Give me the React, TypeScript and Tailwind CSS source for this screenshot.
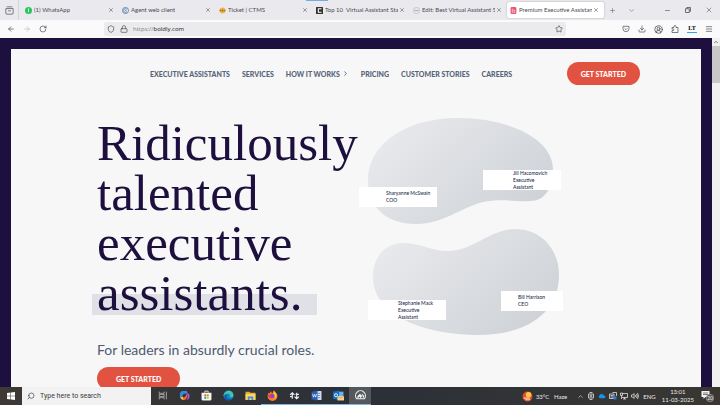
import type { ReactNode } from 'react';
import {
  ArrowLeft,
  ArrowRight,
  ChevronDown,
  ChevronRight,
  ChevronUp,
  CircleUserRound,
  Download,
  Lock,
  Menu,
  Minus,
  Plus,
  RotateCw,
  Search,
  Shield,
  Star,
  X,
} from 'lucide-react';

const tabs: { title: string; icon: ReactNode; active?: boolean }[] = [
  {
    title: '(1) WhatsApp',
    icon: (
      <svg viewBox="0 0 12 12" className="size-full">
        <circle cx="6" cy="6" r="6" fill="#25c65b" />
        <path d="M6 3v6M5 4l1-1" stroke="#fff" strokeWidth="1.5" fill="none" />
      </svg>
    ),
  },
  {
    title: 'Agent web client',
    icon: (
      <svg viewBox="0 0 12 12" className="size-full" fill="none">
        <circle cx="6" cy="6" r="5.2" stroke="#3a7fb5" strokeWidth="1.4" />
        <path d="M8.5 4A3.2 3.2 0 1 0 8.5 8" stroke="#3a7fb5" strokeWidth="1.2" />
        <circle cx="6.5" cy="6" r="1.3" fill="#e0705a" />
      </svg>
    ),
  },
  {
    title: 'Ticket | CTMS',
    icon: (
      <svg viewBox="0 0 12 12" className="size-full">
        <circle cx="6" cy="6" r="5" fill="#f3b531" />
        <path d="M0 6h12M3 4v4M6 3.5v5M9 4v4" stroke="#8a7a55" />
      </svg>
    ),
  },
  {
    title: 'Top 10  Virtual Assistant Staff',
    icon: (
      <svg viewBox="0 0 12 12" className="size-full">
        <rect width="12" height="12" rx="1" fill="#333" />
        <path d="M9.5 3H4v6h5.5" stroke="#fff" strokeWidth="1.8" fill="none" />
      </svg>
    ),
  },
  {
    title: 'Edit: Best Virtual Assistant Sta',
    icon: (
      <svg viewBox="0 0 12 12" className="size-full" fill="none" stroke="#aeb0b8">
        <circle cx="6" cy="6" r="5.3" />
        <path d="M2.5 6h7" strokeWidth="2" />
      </svg>
    ),
  },
  {
    title: 'Premium Executive Assistants',
    active: true,
    icon: (
      <svg viewBox="0 0 12 12" className="size-full">
        <rect x="1" width="10" height="12" rx="2" fill="#f0577c" />
        <path d="M4 3v6h4V5.5H4" stroke="#fbd0da" strokeWidth="1.2" fill="none" />
      </svg>
    ),
  },
];

const menu = ['EXECUTIVE ASSISTANTS', 'SERVICES', 'HOW IT WORKS', 'PRICING', 'CUSTOMER STORIES', 'CAREERS'];

function Tab({ title, icon, active }: { title: string; icon: ReactNode; active?: boolean }) {
  return (
    <div
      className={`my-[2px] flex min-w-0 max-w-[97px] flex-1 items-center rounded-xs pl-[3px] pr-[5px] ${
        active ? 'bg-white shadow-[0_0_2px_#a5a5ad]' : ''
      }`}
    >
      <a href="#" className="flex min-w-0 flex-1 items-center gap-[2px] text-[#4a4a52]">
        <span className="size-[7px] shrink-0">{icon}</span>
        <span className="overflow-hidden whitespace-pre">{title}</span>
      </a>
      <button aria-label="Close tab" className="ml-px shrink-0">
        <X className="size-[6px]" />
      </button>
    </div>
  );
}

function BrowserChrome() {
  return (
    <header className="shrink-0 font-[Lato,sans-serif] text-[6px] leading-[8px] text-[#45454d]">
      <div className="relative flex h-5 bg-[#eae9ee]">
        <span className="absolute left-[306px] top-0 h-px w-[22px] bg-[#74aee0]" />
        <button aria-label="Firefox view" className="mr-[3px] flex w-[19px] shrink-0 items-center justify-center border-r border-[#d5d4da]">
          <svg viewBox="0 0 16 16" className="size-[9px]" fill="none" stroke="currentColor" strokeWidth="1.2">
            <path d="M3 1.500h10M1.500 4.500h13v8a2 2 0 0 1-2 2h-9a2 2 0 0 1-2-2zM5.500 8.500h5" />
          </svg>
        </button>
        {tabs.map((tab) => (
          <Tab key={tab.title} {...tab} />
        ))}
        <div className="ml-[5px] flex items-center gap-3">
          <button aria-label="New tab"><Plus className="size-[7px]" strokeWidth={1.5} /></button>
          <button aria-label="List tabs"><ChevronDown className="size-[7px]" strokeWidth={1.5} /></button>
        </div>
        <div className="ml-auto flex items-center gap-[14px] pr-[7px]">
          <button aria-label="Minimize"><Minus className="size-[7px]" /></button>
          <button aria-label="Restore">
            <svg viewBox="0 0 12 12" className="size-[6px]" fill="none" stroke="currentColor" strokeWidth="1.5">
              <path d="M1 3.500h7.500V11H1zM3.500 3.500V1H11v7.500H8.500" />
            </svg>
          </button>
          <button aria-label="Close window"><X className="size-[8px]" strokeWidth={1.5} /></button>
        </div>
      </div>

      <div className="flex h-[18px] items-center bg-[#fafafb] px-[7px]">
        <div className="flex w-[97px] shrink-0 items-center gap-2">
          <button aria-label="Back"><ArrowLeft className="size-[8px]" /></button>
          <button aria-label="Forward" className="text-[#b9b9be]"><ArrowRight className="size-[8px]" /></button>
          <button aria-label="Reload"><RotateCw className="size-[8px]" /></button>
        </div>
        <div className="flex h-[14px] flex-1 items-center gap-1 rounded-xs bg-[#ebebed] px-[3px]">
          <Shield className="size-[8px]" />
          <Lock className="mx-px size-[8px]" />
          <div className="relative flex-1 font-['Open_Sans',sans-serif]">
            <label htmlFor="url" className="sr-only">Address</label>
            <span className="pointer-events-none absolute inset-0 text-[#7b7b82]" aria-hidden="true">
              https://<span className="text-[#17171c]">boldly.com</span>
            </span>
            <input id="url" className="block w-full bg-transparent text-transparent outline-none" defaultValue="https://boldly.com" />
          </div>
          <button aria-label="Bookmark"><Star className="size-[8px]" /></button>
        </div>
        <div className="ml-14 flex items-center gap-2">
          <button aria-label="Save to Pocket">
            <svg viewBox="0 0 24 24" className="size-[8px]" fill="none" stroke="currentColor" strokeWidth="2">
              <path d="M3 4h18v7a9 9 0 0 1-18 0zM8 10l4 4 4-4" />
            </svg>
          </button>
          <button aria-label="Downloads"><Download className="size-[8px]" /></button>
          <button aria-label="Account"><CircleUserRound className="size-[9px]" /></button>
          <button aria-label="Extensions">
            <svg viewBox="0 0 16 16" className="size-[8px]" fill="none" stroke="currentColor" strokeWidth="1.4">
              <path d="M2 5h4V3a2 2 0 0 1 4 0v2h4v10H2v-4h2a1.500 1.500 0 0 0 0-3H2z" />
            </svg>
          </button>
          <button aria-label="LanguageTool" className="h-[8px] w-[10px] border-b border-[#2ea3f2] font-['Liberation_Serif',serif] text-[6px] font-bold leading-[7px] text-black">
            LT
          </button>
          <button aria-label="Menu"><Menu className="size-[8px]" /></button>
        </div>
      </div>
    </header>
  );
}

function GetStarted({ className }: { className: string }) {
  return (
    <button className={`rounded-full bg-[#e25241] text-[7px] font-black leading-[10px] text-white ${className}`}>
      GET STARTED
    </button>
  );
}

function NameTag({ name, role, className }: { name: string; role: string; className: string }) {
  return (
    <div className={`absolute flex h-5 flex-col justify-center bg-white text-[5px] leading-[7px] text-[#252a4a] ${className}`}>
      <p className="whitespace-nowrap">{name}</p>
      <p>{role}</p>
    </div>
  );
}

function Team() {
  return (
    <div className="relative mt-[11px] w-[204px] shrink-0 font-medium">
      <svg viewBox="0 0 204 221" className="w-full">
        <defs>
          <linearGradient id="blob" x1="0" y1="0.2" x2="1" y2="0.8">
            <stop offset="0" stopColor="#e9eaed" />
            <stop offset="1" stopColor="#cdd1d6" />
          </linearGradient>
        </defs>
        <path
          d="M9 65C9 30 45 3 99 3C150 3 194 24 194 54C194 73 186 86 171 86C155 87 142 83 124 87C103 92 84 109 57 109C28 109 9 93 9 65Z"
          fill="url(#blob)"
        />
        <path
          d="M14 162C14 141 27 128 44 128C62 128 74 137 91 136C115 135 132 114 156 114C182 114 200 134 200 160C200 200 165 220 119 220C75 220 14 205 14 162Z"
          fill="url(#blob)"
        />
      </svg>
      <NameTag name="Sharyanne McSwain" role="COO" className="left-0 top-[72px] w-[78px] pl-[27px]" />
      <NameTag name="Jill Hacomovich" role="Executive Assistant" className="left-[124px] top-[55px] w-[78px] pl-[30px] pr-5" />
      <NameTag name="Stephanie Mack" role="Executive Assistant" className="left-[9px] top-[185px] w-[78px] pl-[30px] pr-5" />
      <NameTag name="Bill Harrison" role="CEO" className="left-[142px] top-[176px] w-[62px] pl-[17px]" />
    </div>
  );
}

function Site() {
  return (
    <div className="flex min-h-0 flex-1">
      <main className="min-w-0 flex-1 overflow-hidden border-x-[11px] border-t-[11px] border-[#1e103e] bg-[#f7f7f7] font-[Lato,sans-serif]">
        <div className="flex items-center justify-between pl-[139px] pr-[61px] pt-[13px]">
          <nav className="flex items-center gap-3 text-[7px] font-black leading-[10px] text-[#566479]">
            {menu.map((item) => (
              <a key={item} href="#" className="flex items-center gap-[2px] whitespace-nowrap">
                {item}
                {item === 'HOW IT WORKS' && <ChevronRight className="size-[7px]" strokeWidth={3} />}
              </a>
            ))}
          </nav>
          <GetStarted className="h-[23px] px-[14px]" />
        </div>

        <section className="flex pl-[86px] pt-[19px]">
          <div className="w-[262px] shrink-0">
            <h1 className="isolate mt-[14px] whitespace-nowrap font-['Liberation_Serif',serif] text-[51px] leading-[50px] text-[#1e103e]">
              <span className="block">Ridiculously</span>
              <span className="block">talented</span>
              <span className="block">executive</span>
              <span className="relative inline-block pr-[10px]">
                assistants.
                <span className="absolute -inset-x-[5px] bottom-[3px] -z-10 h-[21px] bg-[#e0e1e7]" />
              </span>
            </h1>
            <p className="mt-[22px] whitespace-nowrap text-[14px] leading-5 text-[#4d5b70]">
              For leaders in absurdly crucial roles.
            </p>
            <GetStarted className="mt-[7px] h-[23px] px-[19px]" />
          </div>
          <Team />
        </section>
      </main>
      <div className="flex w-2 shrink-0 flex-col items-center bg-[#f1f1f1]">
        <ChevronUp className="my-px size-[6px] shrink-0 text-[#505050]" strokeWidth={3} />
        <div className="h-[37px] w-full bg-[#c9c9c9]" />
      </div>
    </div>
  );
}

const apps: { name: string; open?: boolean; active?: boolean; art: ReactNode }[] = [
  {
    name: 'Task view',
    art: <path d="M4 3v3h9V3M4 17v-3h9v3M4 8h9v4H4zM17 3v14" fill="none" stroke="#c9c9c9" strokeWidth="1.3" />,
  },
  {
    name: 'Copilot',
    art: (
      <>
        <path d="M6 2h6c2 0 2 2 3 5H9C7 7 7 13 4 13C0 13 1 2 6 2z" fill="#2b8de3" />
        <path d="M12 2c4 0 3 5 5 5c4 1 2 11-3 11c3-4 1-9 1-11z" fill="#b45be0" />
        <path d="M4 13h6c2 0 3-5 5-6c0 5-1 11-5 11H8c-3 0-3-2-4-5z" fill="#f0673e" />
        <path d="M2 11c1 2 3 2 5 1l1 6c-4 0-6-3-6-7z" fill="#f3ba3d" />
      </>
    ),
  },
  {
    name: 'Store',
    art: (
      <>
        <path d="M7 5V2h6v3" fill="none" stroke="#fff" strokeWidth="1.5" />
        <path d="M1 5h18v12a2 2 0 0 1-2 2H3a2 2 0 0 1-2-2z" fill="#f5f5f5" />
        <path d="M6 8h3.500v3.500H6z" fill="#f25022" />
        <path d="M10.500 8H14v3.500h-3.500z" fill="#7fba00" />
        <path d="M6 12.500h3.500V16H6z" fill="#00a4ef" />
        <path d="M10.500 12.500H14V16h-3.500z" fill="#ffb900" />
      </>
    ),
  },
  {
    name: 'Edge',
    art: (
      <>
        <circle cx="10" cy="10" r="9" fill="#1681d0" />
        <path d="M1 10C2-1 19-2 19 10c0 4-6 4-7 2c2-3-1-6-4-5C4 7 2 9 1 12z" fill="#3cc9a7" />
        <path d="M7 9c-3 5 2 9 9 7C9 22 1 16 3 10c1-2 3-2 4-1z" fill="#1556a5" />
      </>
    ),
  },
  {
    name: 'File Explorer',
    art: (
      <>
        <path d="M1 3h7l2 2h9v13H1z" fill="#e9a929" />
        <path d="M1 7h18v11H1z" fill="#fcd667" />
        <path d="M5 12h10v6h-3v-3H8v3H5z" fill="#3e8ddd" />
      </>
    ),
  },
  {
    name: 'Firefox',
    open: true,
    art: (
      <>
        <path d="M3 5l2 1 2-4 2 4c2 0 2-4 5-5c0 3 5 5 5 10A9 9 0 0 1 1 11C1 9 2 7 3 5z" fill="#ff7a2b" />
        <path d="M12 1c1 3 7 5 5 11c-1 3-4 5-7 5c5-1 6-7 2-9z" fill="#ffcb3a" />
        <circle cx="9.5" cy="11" r="4" fill="#7f49d8" />
        <path d="M2 9c4-2 7 0 7 2c-3-1-4 2-1 4c-4 0-6-3-6-6z" fill="#f0364f" />
      </>
    ),
  },
  {
    name: 'Sync',
    open: true,
    art: <path d="M6 16V5M2 9l4-4 4 4M14 5v11M10 12l4 4 4-4M2 12h5M12 8h6" fill="none" stroke="#f4f4f4" strokeWidth="2" />,
  },
  {
    name: 'Word',
    open: true,
    art: (
      <>
        <path d="M8 2h11v16H8z" fill="#e3ebf8" />
        <path d="M12 6h5M12 10h5M12 14h5" stroke="#4777c5" strokeWidth="1.5" />
        <path d="M1 3l11-2v18L1 17z" fill="#2b5fb4" />
        <path d="M3 7l1.500 6L6.500 8l2 5L10 7" stroke="#fff" strokeWidth="1.3" fill="none" />
      </>
    ),
  },
  {
    name: 'Outlook',
    open: true,
    art: (
      <>
        <path d="M10 3h9v10h-9z" fill="#64b3ed" />
        <path d="M0 3l11-2v17L0 16z" fill="#1070c8" />
        <circle cx="5.5" cy="9.5" r="2.8" fill="none" stroke="#fff" strokeWidth="1.6" />
        <path d="M8 11h12v8H8z" fill="#f5d193" />
        <path d="M8 11l6 4 6-4" fill="none" stroke="#b88942" />
      </>
    ),
  },
  {
    name: 'Client',
    open: true,
    active: true,
    art: (
      <>
        <path d="M3 16A9 9 0 1 1 17 16z" fill="#555a5e" stroke="#f4f4f4" strokeWidth="2" />
        <path d="M4 12l5-5 4 4-3 5-1-4-4 3zM12 6l5 5-2 4z" fill="#f4f4f4" />
      </>
    ),
  },
];

function Taskbar() {
  return (
    <footer className="flex h-[18px] shrink-0 bg-linear-to-r from-[#3d3934] via-[#2b3038] to-[#3a3732] font-[Lato,sans-serif] text-[6px] leading-[9px] text-[#e9e9e9]">
      <button aria-label="Start" className="flex w-[22px] shrink-0 items-center justify-center">
        <svg viewBox="0 0 16 16" className="size-2" fill="#fff">
          <path d="M0 2l7-1v6.500H0zM8 1l8-1v7.500H8zM0 8.500h7V15l-7-1zM8 8.500h8V16l-8-1z" />
        </svg>
      </button>
      <div className="flex w-[129px] shrink-0 items-center gap-[5px] bg-[#f2f2f2] pl-[5px] font-[Roboto,sans-serif] text-[#3b3b3b]">
        <Search className="size-2 -scale-x-100" />
        <label htmlFor="search" className="sr-only">Search</label>
        <input
          id="search"
          className="min-w-0 flex-1 bg-transparent text-[7px] outline-none placeholder:text-[#3b3b3b]"
          placeholder="Type here to search"
        />
      </div>
      <div className="flex">
        {apps.map((app) => (
          <button
            key={app.name}
            aria-label={app.name}
            className={`flex w-[22px] items-center justify-center border-b ${app.active ? 'bg-[#54585c]' : ''} ${
              app.open ? 'border-[#7bb7e6]' : 'border-transparent'
            }`}
          >
            <svg viewBox="0 0 20 20" className="size-[11px]">{app.art}</svg>
          </button>
        ))}
      </div>
      <div className="ml-auto flex items-center gap-[3px] pr-[6px]">
        <svg viewBox="0 0 20 20" className="size-[11px]">
          <circle cx="10" cy="10" r="9" fill="#e34b32" />
          <circle cx="12" cy="7" r="5" fill="#ffc83d" />
          <path d="M3 13h11M6 16h9" stroke="#f5d5a8" strokeWidth="2" />
        </svg>
        <span className="mr-[7px] whitespace-pre">33°C   Haze</span>
        <button aria-label="Hidden icons"><ChevronUp className="size-[7px]" /></button>
        <svg viewBox="0 0 16 16" className="size-[8px]" fill="none" stroke="currentColor" strokeWidth="1.5">
          <path d="M5 1h6M5 15h6M3 4h10v8H3z" />
          <circle cx="8" cy="8" r="2" />
        </svg>
        <svg viewBox="0 0 18 12" className="h-[6px] w-2">
          <path d="M4 11a4 4 0 0 1 0-7a5 5 0 0 1 9 1a3 3 0 0 1 1 6z" fill="#1495ee" />
        </svg>
        <svg viewBox="0 0 16 16" className="size-[8px]" fill="none" stroke="currentColor" strokeWidth="1.5">
          <path d="M1 4h9v9H1zM7 1h8v7" />
          <path d="M3 7h5M3 10h5" />
          <path d="M9 9h6v6H9z" fill="#2b7bd8" stroke="none" />
        </svg>
        <svg viewBox="0 0 16 16" className="size-[8px]" fill="none" stroke="currentColor" strokeWidth="1.5">
          <path d="M4 3h11v8H4M9 11v3M6 14h6M1 2h4v5H1zM3 7v7" />
        </svg>
        <svg viewBox="0 0 16 16" className="size-[8px]" fill="none" stroke="currentColor" strokeWidth="1.5">
          <path d="M1 6h2l3-3v10l-3-3H1zM9 6q1 2 0 4M11 4q3 4 0 8M13 2q4 6 0 12" />
        </svg>
        <span className="ml-px">ENG</span>
        <time className="ml-[3px] text-center leading-[8px]" dateTime="2025-03-11T13:01">
          13:01
          <br />
          11-03-2025
        </time>
        <button aria-label="Notifications" className="relative ml-1 h-3 w-[13px]">
          <svg viewBox="0 0 26 24" className="size-full">
            <path d="M1 2h16v12H9l-4 4v-4H1z" fill="#f3f3f3" />
            <path d="M4 6h10M4 9h10" stroke="#555" strokeWidth="1.5" />
            <circle cx="18" cy="16" r="7.5" fill="#55524e" stroke="#bbb" />
          </svg>
          <span className="absolute bottom-0 right-[1px] text-[5px] leading-[8px]">20</span>
        </button>
      </div>
    </footer>
  );
}

export default function App() {
  return (
    <div className="flex h-screen flex-col overflow-hidden">
      <BrowserChrome />
      <Site />
      <Taskbar />
    </div>
  );
}
